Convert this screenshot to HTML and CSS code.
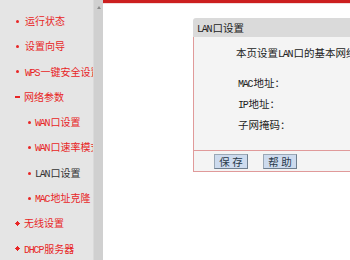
FILE: index.html
```html
<!DOCTYPE html>
<html lang="zh-CN">
<head>
<meta charset="utf-8">
<title>LAN口设置</title>
<link rel="stylesheet" href="styles.css">
</head>
<body>
<div class="page">
  <nav class="menu">
    <ul class="menu-list">
      <li class="item dot">运行状态</li>
      <li class="item dot">设置向导</li>
      <li class="item dot"><span class="en">WPS</span>一键安全设置</li>
      <li class="item dash">网络参数</li>
      <li class="item sub"><span class="en">WAN</span>口设置</li>
      <li class="item sub"><span class="en">WAN</span>口速率模式</li>
      <li class="item sub current"><span class="en">LAN</span>口设置</li>
      <li class="item sub"><span class="en">MAC</span>地址克隆</li>
      <li class="item plus">无线设置</li>
      <li class="item plus"><span class="en">DHCP</span>服务器</li>
    </ul>
  </nav>
  <div class="scrollbar"><span class="scroll-up"></span></div>
  <main class="main">
    <div class="topbar"></div>
    <section class="panel">
      <div class="panel-title"><span class="en">LAN</span>口设置</div>
      <div class="panel-body">
        <p class="desc">本页设置<span class="en">LAN</span>口的基本网络参数。</p>
        <div class="field"><span class="en">MAC</span>地址：</div>
        <div class="field"><span class="en">IP</span>地址：</div>
        <div class="field">子网掩码：</div>
      </div>
      <div class="panel-foot">
        <button class="btn" type="button">保 存</button>
        <button class="btn" type="button">帮 助</button>
      </div>
    </section>
  </main>
</div>
</body>
</html>
```

FILE: styles.css
```css
* { box-sizing: border-box; }

html, body {
  margin: 0;
  padding: 0;
  background: #ffffff;
}

body {
  font-family: "Noto Sans CJK SC", "Noto Sans", sans-serif;
  font-size: 10.5px;
  color: #222222;
}

.en {
  font-family: "Liberation Mono", monospace;
  font-size: 10px;
  letter-spacing: -1.2px;
  margin-right: 1px;
}

.page {
  display: flex;
  width: 350px;
  height: 260px;
  overflow: hidden;
}

/* ---------- left menu ---------- */
.menu {
  width: 93px;
  flex: none;
  background: #e5e5e5;
  overflow: hidden;
}

.menu-list {
  list-style: none;
  margin: 0;
  padding: 8px 0 0 0;
}

.item {
  height: 25.3px;
  line-height: 25.3px;
  white-space: nowrap;
  overflow: hidden;
  color: #e82626;
  font-size: 10px;
  padding-left: 15px;
}

.item::before {
  content: "";
  display: inline-block;
  vertical-align: middle;
  position: relative;
  top: -1px;
}

.dot::before {
  width: 3px;
  height: 3px;
  border-radius: 50%;
  background: #e82626;
  margin: 0 6px 0 1px;
}

.dash::before {
  width: 5px;
  height: 2px;
  background: #e82626;
  margin-right: 4px;
}

.plus::before {
  width: 5px;
  height: 5px;
  margin-right: 4px;
  background:
    linear-gradient(#e82626, #e82626) center / 5px 1px no-repeat,
    linear-gradient(#e82626, #e82626) center / 1px 5px no-repeat,
    linear-gradient(#e82626, #e82626) center / 3px 3px no-repeat;
}

.sub {
  padding-left: 27px;
}

.sub::before {
  width: 3px;
  height: 3px;
  border-radius: 50%;
  background: #e82626;
  margin: 0 4px 0 1px;
}

.current {
  color: #333333;
}

/* ---------- scrollbar ---------- */
.scrollbar {
  width: 10px;
  flex: none;
  background: #d0d0d0;
  border-left: 1px solid #dadada;
  padding-top: 6px;
  display: flex;
  justify-content: center;
}

.scroll-up {
  width: 0;
  height: 0;
  border-left: 2.5px solid transparent;
  border-right: 2.5px solid transparent;
  border-bottom: 3px solid #8a8a8a;
}

/* ---------- main area ---------- */
.main {
  flex: 1;
  min-width: 0;
  overflow: hidden;
}

.topbar {
  height: 4px;
  background: #cc1f1f;
  border-bottom: 1px solid #f3dcdc;
}

.panel {
  margin: 14px 0 0 90px;
  width: 220px;
}

.panel-title {
  height: 19px;
  line-height: 19px;
  background: #dadada;
  border-radius: 3px 0 0 0;
  padding-left: 4px;
  color: #222222;
  font-size: 10.5px;
  white-space: nowrap;
}

.panel-body {
  height: 113px;
  background: #f4f4f4;
  border-left: 1px solid #e09a9a;
  padding: 8px 0 0 0;
}

.desc {
  margin: 0 0 9.5px 0;
  padding-left: 42px;
  line-height: 16px;
  white-space: nowrap;
}

.field {
  padding-left: 44px;
  line-height: 19px;
  white-space: nowrap;
}

.panel-foot {
  height: 22px;
  background: #f4f4f4;
  border-left: 1px solid #e09a9a;
  border-top: 1px solid #e09a9a;
  border-bottom: 1px solid #e09a9a;
  padding: 3px 0 0 20px;
  display: flex;
  gap: 15px;
  align-items: flex-start;
}

.btn {
  width: 34px;
  height: 15px;
  margin: 0;
  padding: 0;
  background: #cddbee;
  border: 1px solid #6f7f8f;
  border-top-color: #9aa8b6;
  border-left-color: #9aa8b6;
  font-family: "Noto Sans CJK SC", sans-serif;
  font-size: 10.5px;
  line-height: 13px;
  color: #2a3a4a;
}
```
